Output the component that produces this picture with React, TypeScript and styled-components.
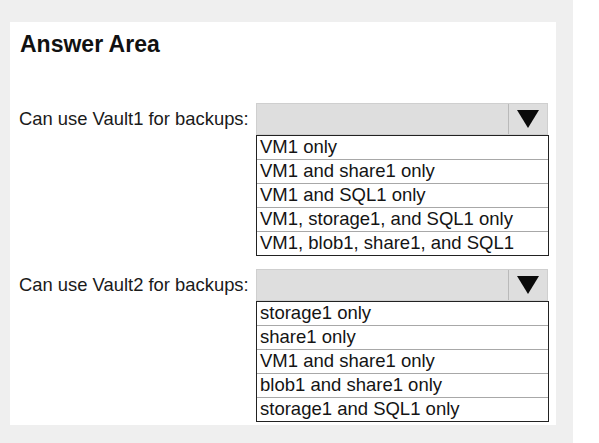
import React from 'react';
import styled, { createGlobalStyle } from 'styled-components';

const GlobalStyle = createGlobalStyle`
  html, body {
    margin: 0;
    padding: 0;
    background: #ffffff;
  }
  body {
    font-family: "Liberation Sans", Arial, sans-serif;
    color: #1a1a1a;
  }
`;

const Page = styled.div`
  display: flex;
  width: 599px;
  height: 443px;
`;

const Backdrop = styled.div`
  width: 573px;
  background: #efefef;
  padding: 22px 17px 18px 10px;
  box-sizing: border-box;
`;

const Panel = styled.div`
  background: #ffffff;
  height: 403px;
  padding: 8px 0 0 9px;
  box-sizing: border-box;
`;

const Title = styled.h2`
  margin: 0 0 0 1px;
  font-size: 23px;
  font-weight: bold;
  line-height: 28px;
  color: #111;
`;

const Question = styled.div<{ top: number }>`
  display: grid;
  grid-template-columns: 237px 293px;
  margin-top: ${p => p.top}px;
`;

const Label = styled.div`
  font-size: 18.4px;
  line-height: 32px;
  color: #1a1a1a;
  white-space: nowrap;
`;

const Select = styled.div`
  display: flex;
  width: 292px;
  height: 32px;
  background: #dedede;
  border: 1px solid #cfcfcf;
  box-sizing: border-box;
`;

const SelectValue = styled.div`
  flex: 1;
  border-right: 1px solid #b9b9b9;
`;

const ArrowBox = styled.div`
  width: 38px;
  display: flex;
  align-items: center;
  justify-content: center;
`;

const Options = styled.ul`
  grid-column: 2;
  margin: 0;
  padding: 0;
  list-style: none;
  border: 1px solid #222;
  box-sizing: border-box;
`;

const Option = styled.li`
  height: 24px;
  line-height: 22px;
  padding-left: 3px;
  font-size: 18.5px;
  color: #141414;
  white-space: nowrap;
  border-bottom: 1px solid #a8a8a8;
  box-sizing: border-box;

  &:last-child {
    border-bottom: none;
    height: 23px;
  }
`;

const Arrow = () => (
  <svg width="22" height="18" viewBox="0 0 22 18">
    <polygon points="0,0 22,0 11,18" fill="#0a0a0a" />
  </svg>
);

interface DropProps {
  label: string;
  options: string[];
  top: number;
}

const Dropdown: React.FC<DropProps> = ({ label, options, top }) => (
  <Question top={top}>
    <Label>{label}</Label>
    <Select>
      <SelectValue />
      <ArrowBox>
        <Arrow />
      </ArrowBox>
    </Select>
    <Options>
      {options.map(o => (
        <Option key={o}>{o}</Option>
      ))}
    </Options>
  </Question>
);

export default function App() {
  return (
    <>
      <GlobalStyle />
      <Page>
        <Backdrop>
          <Panel>
            <Title>Answer Area</Title>
            <Dropdown
              top={45}
              label="Can use Vault1 for backups:"
              options={[
                'VM1 only',
                'VM1 and share1 only',
                'VM1 and SQL1 only',
                'VM1, storage1, and SQL1 only',
                'VM1, blob1, share1, and SQL1',
              ]}
            />
            <Dropdown
              top={13}
              label="Can use Vault2 for backups:"
              options={[
                'storage1 only',
                'share1 only',
                'VM1 and share1 only',
                'blob1 and share1 only',
                'storage1 and SQL1 only',
              ]}
            />
          </Panel>
        </Backdrop>
      </Page>
    </>
  );
}
